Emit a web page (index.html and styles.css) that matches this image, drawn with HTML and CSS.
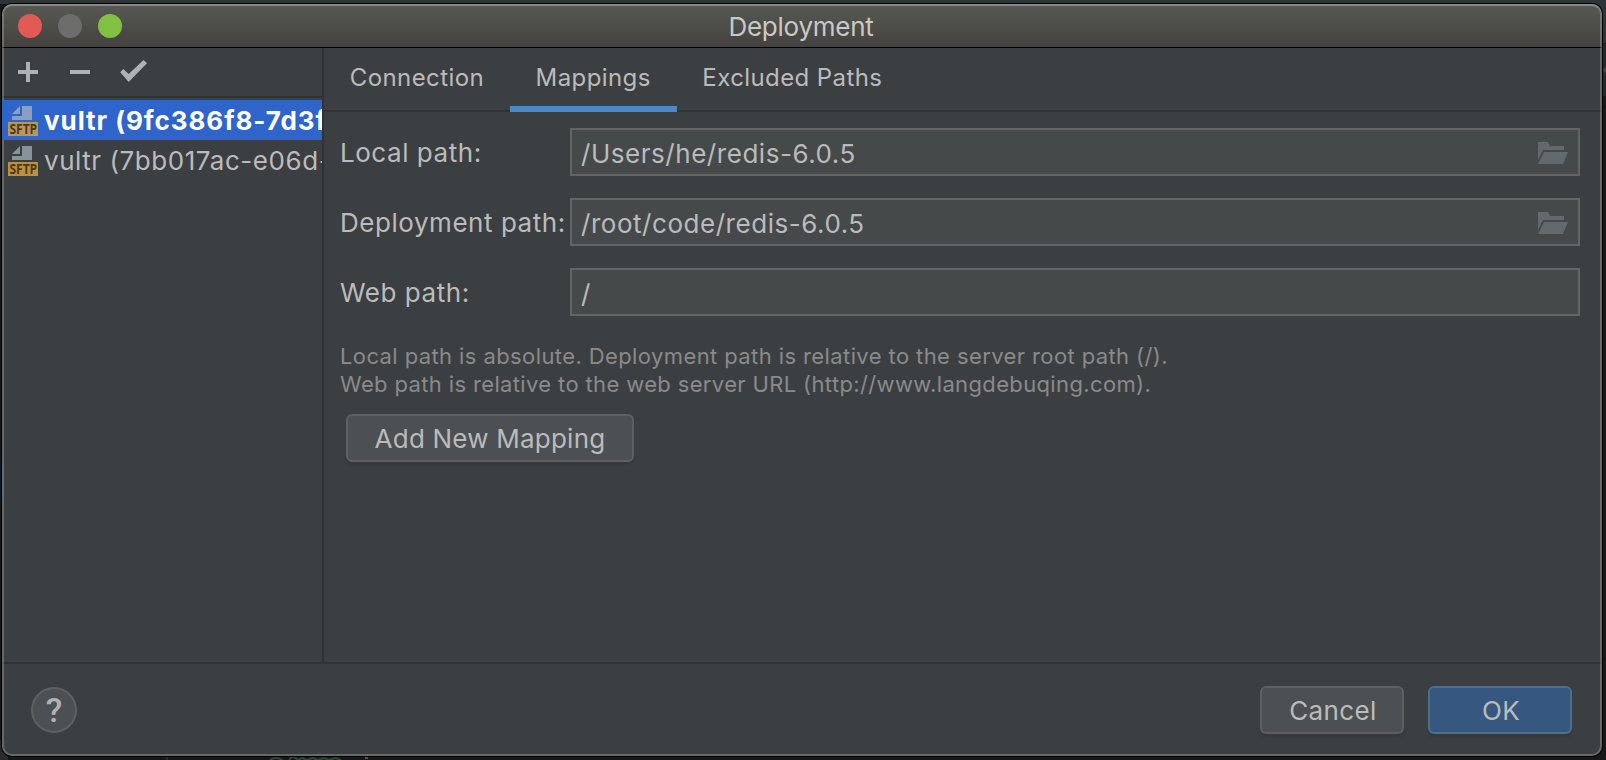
FILE: index.html
```html
<!DOCTYPE html>
<html lang="en">
<head>
<meta charset="utf-8">
<title>Deployment</title>
<link rel="stylesheet" href="styles.css">
</head>
<body>
<svg class="backdrop" width="1606" height="760" viewBox="0 0 1606 760">
  <path fill="#2f3439" d="M0 0h1606v43h-10V4H0z"/>
  <path fill="#26292b" d="M1600 44h6v52h-6z"/>
  <path fill="#42474a" d="M1606 66v8l-3-4z"/>
  <path fill="#08192e" d="M0 460h3v40H0z"/>
  <path fill="#2a292b" d="M0 740h8v20H0zM166 757h2v3h-2z"/>
  <path fill="none" stroke="#2d4a38" stroke-width="2" d="M270 760q6-4 12 0t8-1 8 1l4-2 5 2 6-2 5 2 6-2 5 2 6-2 6 2"/>
  <path fill="#7a4424" d="M365 757h3v2h-3z"/>
</svg>
<div class="window">
  <header class="titlebar">
    <div class="lights"><span class="light close"></span><span class="light minimize"></span><span class="light maximize"></span></div>
    <h1 class="title">Deployment</h1>
  </header>
  <div class="main">
    <aside class="sidebar">
      <div class="toolbar">
        <svg class="tool" width="32" height="32" viewBox="0 0 32 32"><path d="M6 14h8V6h4v8h8v4h-8v8h-4v-8H6z"/></svg>
        <svg class="tool" width="32" height="32" viewBox="0 0 32 32"><path d="M6 14h20v4H6z"/></svg>
        <svg class="tool" width="32" height="32" viewBox="0 0 32 32"><path d="M4.2 16.3L7.3 13.1l5.4 5L27.5 4 31 7.2 12.7 26z"/></svg>
      </div>
      <ul class="servers">
        <li class="server selected">
          <svg class="sftp" width="30" height="30" viewBox="0 0 30 30"><path fill="#8ba0bc" d="M4 8L12 0v8zM14 0h10v14H4v-4h10z"/><path fill="#ba9659" d="M0 16h30v14H0z"/><text class="badge" x="1.4" y="28" textLength="27.8" lengthAdjust="spacingAndGlyphs">SFTP</text></svg>
          <span class="name">vultr (9fc386f8-7d3f</span>
        </li>
        <li class="server">
          <svg class="sftp" width="30" height="30" viewBox="0 0 30 30"><path fill="#87939a" d="M4 8L12 0v8zM14 0h10v14H4v-4h10z"/><path fill="#be9039" d="M0 16h30v14H0z"/><text class="badge" x="1.4" y="28" textLength="27.8" lengthAdjust="spacingAndGlyphs">SFTP</text></svg>
          <span class="name">vultr (7bb017ac-e06d-</span>
        </li>
      </ul>
    </aside>
    <section class="content">
      <nav class="tabs">
        <a class="tab">Connection</a><a class="tab active">Mappings</a><a class="tab">Excluded Paths</a>
      </nav>
      <div class="form">
        <label class="label">Local path:</label>
        <div class="field"><span>/Users/he/redis-6.0.5</span><svg class="folder" width="30" height="22" viewBox="0 0 30 22"><path d="M0 0h10l2 4h14v4H5L0 18zM6 10h24l-5 12H0z"/></svg></div>
        <label class="label">Deployment path:</label>
        <div class="field"><span>/root/code/redis-6.0.5</span><svg class="folder" width="30" height="22" viewBox="0 0 30 22"><path d="M0 0h10l2 4h14v4H5L0 18zM6 10h24l-5 12H0z"/></svg></div>
        <label class="label">Web path:</label>
        <div class="field"><span>/</span></div>
      </div>
      <p class="hint">Local path is absolute. Deployment path is relative to the server root path (/).<br><span class="second">Web path is relative to the web server URL (http://www.langdebuqing.com).</span></p>
      <button class="button add">Add New Mapping</button>
    </section>
  </div>
  <footer class="footer">
    <button class="help">?</button>
    <div class="actions">
      <button class="button">Cancel</button>
      <button class="button primary">OK</button>
    </div>
  </footer>
</div>
</body>
</html>
```
FILE: styles.css
```css
* { box-sizing: border-box; }

body {
  margin: 0;
  padding: 4px 4px 4px 2px;
  height: 760px;
  overflow: hidden;
  background: #191819;
  font-family: Inter, "Liberation Sans", sans-serif;
  font-size: 26px;
  letter-spacing: 0.54px;
  color: #bbb;
}

.backdrop { position: absolute; left: 0; top: 0; z-index: -1; }

.window {
  position: relative;
  display: flex;
  flex-direction: column;
  width: 1600px;
  height: 752px;
  background: #3c3f41;
  border-radius: 10px;
  box-shadow: 0 0 0 1px #000;
}

/* translucent rim drawn over the window's edge */
.window::after {
  content: "";
  position: absolute;
  inset: 0;
  z-index: 1;
  border: 2px solid rgba(255, 255, 255, 0.22);
  border-top-color: rgba(255, 255, 255, 0.3);
  border-radius: 10px;
  pointer-events: none;
}

.titlebar {
  display: grid;
  grid-template-columns: 200px 1fr 202px;
  align-items: center;
  height: 44px;
  border-bottom: 1px solid #000;
  border-radius: 10px 10px 0 0;
  background: linear-gradient(#585953, #434240);
}

.lights { display: flex; gap: 16px; padding-left: 16px; }
.light { width: 24px; height: 24px; border-radius: 50%; }
.close { background: #e15b54; }
.minimize { background: #6d6d6b; }
.maximize { background: #80c141; }

.title {
  margin: 2px 0 0;
  text-align: center;
  font-size: 26px;
  line-height: 32px;
  font-weight: 400;
  letter-spacing: -0.25px;
  color: #c9c9c6;
}

.main { display: flex; height: 614px; }

.sidebar { width: 322px; border-right: 2px solid #323232; }

.toolbar {
  display: flex;
  gap: 20px;
  height: 50px;
  padding: 8px 0 0 10px;
  border-bottom: 2px solid #323232;
}

.tool { fill: #afb1b3; }

.servers { list-style: none; margin: 0; padding: 2px 0 0; }

.server {
  display: flex;
  align-items: center;
  gap: 6px;
  height: 40px;
  padding-left: 6px;
  overflow: hidden;
  white-space: nowrap;
}

.sftp { flex: none; margin-top: 2px; }
.badge { font: 700 14.5px "Open Sans", sans-serif; letter-spacing: 0; fill: #4b3a20; }

.selected {
  position: relative;
  z-index: 2;
  background: #2f65ca;
  color: #fff;
  font-weight: 700;
  letter-spacing: 0.95px;
}

.content { flex: 1; }

.tabs {
  display: flex;
  height: 64px;
  border-bottom: 2px solid #323232;
  font-size: 24px;
  letter-spacing: 0.4px;
}

.tab { height: 64px; padding: 0 25.8px; line-height: 59px; }
.active { border-bottom: 6px solid #4a88c7; }

.form {
  display: grid;
  grid-template-columns: 230px 1010px;
  row-gap: 22px;
  padding: 16px 0 0 16px;
}

.label { line-height: 50px; height: 48px; }

.field {
  display: flex;
  align-items: center;
  justify-content: space-between;
  height: 48px;
  padding: 2px 10px 0 9px;
  border: 2px solid #646464;
  background: #45494a;
}

.folder { fill: #626a6e; }

.hint {
  margin: 26px 0 0 16px;
  font-size: 22px;
  line-height: 28px;
  letter-spacing: 0.4px;
  color: #8a8a8a;
}

.second { letter-spacing: 0.36px; }

.button {
  width: 144px;
  height: 48px;
  padding: 0;
  border: 2px solid #5e6060;
  border-radius: 6px;
  background: #4c5052;
  box-shadow: 0 3px 2px rgba(50, 50, 50, 0.5);
  color: #bbb;
  font: inherit;
  letter-spacing: 0.4px;
}

.actions .button { padding-left: 2px; }
.add { width: 288px; margin: 16px 0 0 22px; letter-spacing: 0.22px; display: block; }
.primary { background: #365880; border-color: #4c708c; }

.footer {
  display: flex;
  align-items: center;
  justify-content: space-between;
  height: 94px;
  padding: 0 30px 0 29px;
  border-top: 2px solid #323232;
}

.actions { display: flex; gap: 24px; }

.help {
  width: 46px;
  height: 46px;
  padding: 0;
  border: 2px solid #5e6060;
  border-radius: 50%;
  background: #4c5052;
  color: #afb1b3;
  font: 500 34px/42px Roboto, sans-serif;
}
```
